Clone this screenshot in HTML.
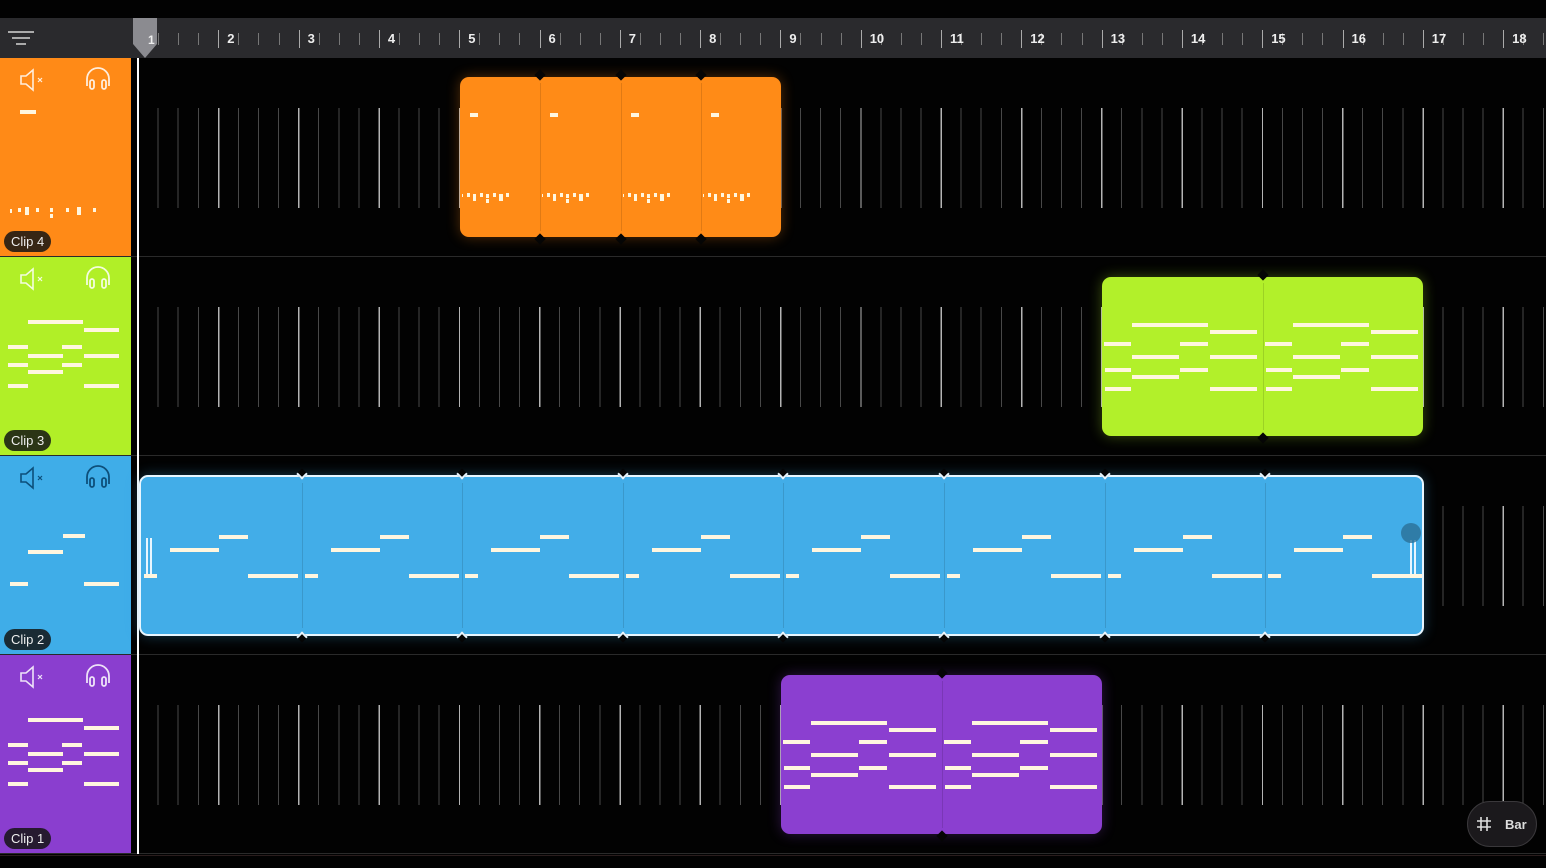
<!DOCTYPE html>
<html><head><meta charset="utf-8"><style>
*{margin:0;padding:0;box-sizing:border-box}
body{width:1546px;height:868px;background:#020202;overflow:hidden;position:relative;font-family:"Liberation Sans",sans-serif}
.abs{position:absolute}
#ruler{left:0;top:18px;width:1546px;height:40px;background:#2a2a2d}
.lbl{position:absolute;top:13px;color:#eee;font-size:13px;font-weight:bold}
.tk{position:absolute;width:1px;background:#777}
.track{position:absolute;left:0;width:1546px;height:199px;border-bottom:1px solid #2a2a2a}
.hdr{position:absolute;left:0;top:0;width:131px;height:198px}
.pill{position:absolute;left:4px;bottom:4px;height:21px;padding:0 7px;border-radius:11px;background:rgba(20,20,20,.85);color:#eee;font-size:13px;line-height:21px}
.grid{position:absolute;left:140px;right:0;top:50px;height:100px;
background:repeating-linear-gradient(90deg,transparent 0 17.6px,rgba(255,255,255,.28) 17.6px 18.6px,transparent 18.6px 37.7px,rgba(255,255,255,.28) 37.7px 38.7px,transparent 38.7px 57.8px,rgba(255,255,255,.28) 57.8px 58.8px,transparent 58.8px 77.9px,rgba(255,255,255,.7) 77.9px 79.3px,transparent 79.3px 80.3px)}
.clip{position:absolute;border-radius:9px}
.n{position:absolute;height:4px;background:#fff6df}
.nt{position:absolute;width:8px;height:8px;background:#050505;transform:rotate(45deg)}
.sl{position:absolute;top:6px;bottom:6px;width:1px;background:rgba(0,0,0,.12)}
</style></head><body>
<div id="ruler" class="abs">
<div class="abs" style="left:8px;top:13px;width:26px;height:2px;background:#aaa"></div>
<div class="abs" style="left:12px;top:19px;width:18px;height:2px;background:#aaa"></div>
<div class="abs" style="left:16px;top:25px;width:10px;height:2px;background:#aaa"></div>
</div>
<div id="tracks"></div>
<svg class="abs" style="left:132px;top:18px" width="26" height="42"><path d="M1 0H25V26L13 40L1 26Z" fill="#8b8b90"/><text x="16" y="26" font-size="12" font-weight="bold" fill="#eee" font-family="Liberation Sans">1</text></svg>
<div class="abs" style="left:137px;top:58px;width:2px;height:796px;background:#fff"></div>
<div class="abs" style="left:1467px;top:801px;width:70px;height:46px;border-radius:23px;background:#1b191c;border:1px solid #3a383b"></div>
<svg class="abs" style="left:1476px;top:816px" width="16" height="16" stroke="#ddd" stroke-width="1.6"><path d="M5 1V15M11 1V15M1 5H15M1 11H15"/></svg>
<div class="abs" style="left:1505px;top:817px;color:#ddd;font-size:13px;font-weight:bold">Bar</div>
<div class="abs" style="left:0;top:855px;width:1546px;height:1px;background:#2a1d1d"></div>
<script>
const B=80.3,X0=138;
const r=document.getElementById('ruler');
for(let b=0;b<18;b++){for(let k=0;k<4;k++){const x=X0+b*B+k*B/4;if(x>1546)break;const t=document.createElement('div');t.className='tk';t.style.left=x+'px';if(k==0){t.style.top='12px';t.style.height='18px';t.style.background='#aaa'}else{t.style.top='15px';t.style.height='12px'}r.appendChild(t);}
 const l=document.createElement('div');l.className='lbl';l.style.left=(X0+b*B+(b==0?10:9))+'px';l.textContent=b+1;if(b>0)r.appendChild(l);}
const T=document.getElementById('tracks');
const cols=['#ff8a17','#b1ef27','#3fade8','#8a3ecf'];
const names=['Clip 4','Clip 3','Clip 2','Clip 1'];
let h='';
for(let i=0;i<4;i++){const top=58+i*199;
h+=`<div class="track" style="top:${top}px"><div class="grid"></div><div class="hdr" style="background:${cols[i]}">
<svg style="position:absolute;left:19px;top:10px" width="28" height="24" fill="none" stroke="${i==2?'#0d4f7a':'#fff'}" stroke-width="1.6" opacity="${i==2?1:.85}"><path d="M2 8H7L14 2V22L7 16H2Z"/><path d="M19 10L23 14M23 10L19 14" stroke-width="1.2"/></svg>
<svg style="position:absolute;left:84px;top:8px" width="28" height="26" fill="none" stroke="${i==2?'#0d4f7a':'#fff'}" stroke-width="1.8" opacity="${i==2?1:.85}"><path d="M3 20V13A11 11 0 0 1 25 13V20"/><rect x="6" y="14" width="4" height="9" rx="2"/><rect x="18" y="14" width="4" height="9" rx="2"/></svg>
<div id="hn${i}"></div><div class="pill">${names[i]}</div></div></div>`;}
T.innerHTML=h;
function clip(x,y,w,hh,c,segW,notes,extra,bl){let s=`<div class="clip" style="left:${x}px;top:${y}px;width:${w}px;height:${hh}px;background:${c};box-shadow:0 0 14px ${c}55;${extra||''}">`;
 const n=Math.round(w/segW);for(let k=0;k<n;k++){const sx=k*segW;if(k>0){s+=`<div class="sl" style="left:${sx}px"></div>`;
  if(bl)s+=`<div class="nt" style="left:${sx-4}px;top:-7px;border-right:2px solid #e8f6ff;border-bottom:2px solid #e8f6ff"></div><div class="nt" style="left:${sx-4}px;bottom:-7px;border-left:2px solid #e8f6ff;border-top:2px solid #e8f6ff"></div>`;
  else s+=`<div class="nt" style="left:${sx-4}px;top:-6px"></div><div class="nt" style="left:${sx-4}px;bottom:-6px"></div>`;}
  for(const [a,ww,yy,hgt] of notes){s+=`<div class="n" style="left:${sx+a}px;top:${yy}px;width:${ww}px;${hgt?'height:'+hgt+'px':''}"></div>`}}
 return s+'</div>';}
const green=[[30,76,46],[108,47,53],[2,27,65],[78,28,65],[30,47,78],[108,47,78],[3,26,91],[78,28,91],[30,47,98],[3,26,110],[108,47,110]];
const orange=[[10,8,36],[2,1,117,3],[7,3,116],[13,3,117,7],[20,3,116],[26,3,117],[26,3,122],[33,3,116],[39,4,117,7],[46,3,116]];
const blue=[[3,13,97],[29,49,71],[78,29,58],[107,50,97]];
let c='';
c+=clip(460,77,321,160,'#ff8b17',80.3,orange);
c+=clip(1102,277,321,159,'#b2f02a',160.6,green);
c+=clip(781,675,321,159,'#8b3fd0',160.6,green);
c+=clip(139,475,1285,161,'#42ade8',160.6,blue,'border:2px solid #e8f6ff;',true);
c+=`<div class="abs" style="left:146px;top:538px;width:2px;height:36px;background:#e8f6ff"></div><div class="abs" style="left:150px;top:538px;width:2px;height:36px;background:#e8f6ff"></div>
<div class="abs" style="left:1410px;top:540px;width:2px;height:34px;background:#e8f6ff"></div><div class="abs" style="left:1414px;top:540px;width:2px;height:34px;background:#e8f6ff"></div>
<div class="abs" style="left:1401px;top:523px;width:20px;height:20px;border-radius:10px;background:#2a6f96;opacity:.8"></div>`;
document.body.insertAdjacentHTML('beforeend',c);
function hn(i,arr){document.getElementById('hn'+i).innerHTML=arr.map(([a,w,y,hh])=>`<div class="n" style="left:${a}px;top:${y}px;width:${w}px;height:${hh||4}px"></div>`).join('');}
hn(0,[[20,16,52],[10,2,151],[18,3,150],[25,4,149,8],[36,3,150],[50,3,150],[50,3,156],[66,3,150],[77,4,149,8],[93,3,150]]);
hn(1,[[28,55,63],[84,35,71],[8,20,88],[62,20,88],[28,35,97],[84,35,97],[8,20,106],[62,20,106],[28,35,113],[8,20,127],[84,35,127]]);
hn(2,[[63,22,78],[28,35,94],[10,18,126],[84,35,126]]);
hn(3,[[28,55,63],[84,35,71],[8,20,88],[62,20,88],[28,35,97],[84,35,97],[8,20,106],[62,20,106],[28,35,113],[8,20,127],[84,35,127]]);
</script>
</body></html>
